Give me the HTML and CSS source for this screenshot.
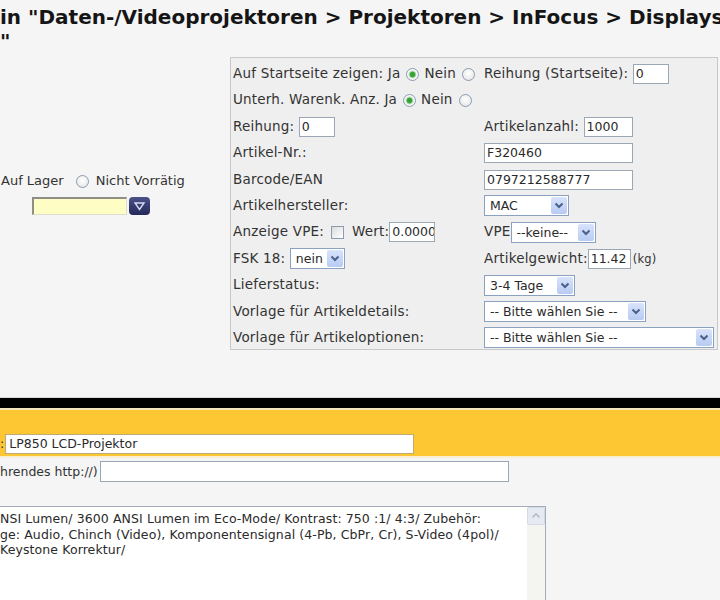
FILE: index.html
```html
<!DOCTYPE html>
<html lang="de">
<head>
<meta charset="utf-8">
<title>Artikel bearbeiten</title>
<link rel="stylesheet" href="styles.css">
</head>
<body>
<h1 class="title">in "Daten-/Videoprojektoren &gt; Projektoren &gt; InFocus &gt; Displays<br>"</h1>

<div class="main">
  <div class="stock">
    <div class="stock-line">Auf Lager<span class="radio stock-radio"></span>Nicht Vorrätig</div>
    <div class="date-row">
      <span class="date-input"></span><span class="date-btn"><svg width="21" height="18" viewBox="0 0 21 18"><polygon points="6,6 15,6 10.5,12.5" fill="none" stroke="#d6daf6" stroke-width="1.4"/></svg></span>
    </div>
  </div>

  <div class="panel">
    <div class="cell">Auf Startseite zeigen: Ja<span class="radio on"></span>Nein<span class="radio"></span></div>
    <div class="cell">Reihung (Startseite): <span class="inp w36">0</span></div>

    <div class="cell">Unterh. Warenk. Anz. Ja<span class="radio on"></span>Nein<span class="radio"></span></div>
    <div class="cell"></div>

    <div class="cell">Reihung: <span class="inp w36">0</span></div>
    <div class="cell">Artikelanzahl: <span class="inp w49">1000</span></div>

    <div class="cell">Artikel-Nr.:</div>
    <div class="cell"><span class="inp w149">F320460</span></div>

    <div class="cell">Barcode/EAN</div>
    <div class="cell"><span class="inp w149">0797212588777</span></div>

    <div class="cell">Artikelhersteller:</div>
    <div class="cell"><span class="sel w85"><span class="txt">MAC</span><span class="arr"><svg width="16" height="17" viewBox="0 0 16 17"><polyline points="4.5,6.5 8,10 11.5,6.5" fill="none" stroke="#4a5f8c" stroke-width="2"/></svg></span></span></div>

    <div class="cell">Anzeige VPE: <span class="check"></span> Wert:<span class="inp w46">0.0000</span></div>
    <div class="cell">VPE<span class="sel w85"><span class="txt">--keine--</span><span class="arr"><svg width="16" height="17" viewBox="0 0 16 17"><polyline points="4.5,6.5 8,10 11.5,6.5" fill="none" stroke="#4a5f8c" stroke-width="2"/></svg></span></span></div>

    <div class="cell">FSK 18: <span class="sel w55"><span class="txt">nein</span><span class="arr"><svg width="16" height="17" viewBox="0 0 16 17"><polyline points="4.5,6.5 8,10 11.5,6.5" fill="none" stroke="#4a5f8c" stroke-width="2"/></svg></span></span></div>
    <div class="cell">Artikelgewicht:<span class="inp w43">11.42</span><span class="unit">(kg)</span></div>

    <div class="cell">Lieferstatus:</div>
    <div class="cell"><span class="sel w91"><span class="txt">3-4 Tage</span><span class="arr"><svg width="16" height="17" viewBox="0 0 16 17"><polyline points="4.5,6.5 8,10 11.5,6.5" fill="none" stroke="#4a5f8c" stroke-width="2"/></svg></span></span></div>

    <div class="cell">Vorlage für Artikeldetails:</div>
    <div class="cell"><span class="sel w162"><span class="txt">-- Bitte wählen Sie --</span><span class="arr"><svg width="16" height="17" viewBox="0 0 16 17"><polyline points="4.5,6.5 8,10 11.5,6.5" fill="none" stroke="#4a5f8c" stroke-width="2"/></svg></span></span></div>

    <div class="cell">Vorlage für Artikeloptionen:</div>
    <div class="cell"><span class="sel w230"><span class="txt">-- Bitte wählen Sie --</span><span class="arr"><svg width="16" height="17" viewBox="0 0 16 17"><polyline points="4.5,6.5 8,10 11.5,6.5" fill="none" stroke="#4a5f8c" stroke-width="2"/></svg></span></span></div>
  </div>
</div>

<div class="bar"></div>
<div class="yellow">
  <div class="name-row">:<span class="inp name">LP850 LCD-Projektor</span></div>
</div>
<div class="url-row">hrendes http://)<span class="inp url"></span></div>

<div class="ta">
  <div class="ta-text">NSI Lumen/ 3600 ANSI Lumen im Eco-Mode/ Kontrast: 750 :1/ 4:3/ Zubehör:
ge: Audio, Chinch (Video), Komponentensignal (4-Pb, CbPr, Cr), S-Video (4pol)/
Keystone Korrektur/</div>
  <div class="ta-scroll"><span class="ta-up"><svg width="16" height="16" viewBox="0 0 16 16"><polyline points="4.5,9.5 8,6 11.5,9.5" fill="none" stroke="#b4bccb" stroke-width="1.6"/></svg></span></div>
</div>
</body>
</html>
```

FILE: styles.css
```css
html, body {
  margin: 0;
  width: 720px;
  height: 600px;
  overflow: hidden;
}
body {
  background: #f5f5f5;
  font-family: "DejaVu Sans", Verdana, sans-serif;
  font-size: 13.5px;
  color: #333;
}
.title {
  margin: 0;
  padding-top: 5px;
  font-size: 20px;
  line-height: 24px;
  font-weight: bold;
  white-space: nowrap;
  color: #151515;
}
.main {
  display: flex;
  margin-top: 4px;
}
.stock {
  width: 230px;
  flex: none;
  padding-top: 115px;
  box-sizing: border-box;
}
.stock-line {
  font-size: 13px;
  line-height: 18px;
  white-space: nowrap;
  padding-left: 1px;
}
.date-row {
  display: flex;
  margin-top: 7px;
  margin-left: 32px;
  gap: 2px;
}
.date-input {
  width: 95px;
  height: 18px;
  box-sizing: border-box;
  background: #fdfdc4;
  border-top: 2px solid #8e8e86;
  border-left: 2px solid #8e8e86;
  border-right: 1px solid #dcdcd0;
  border-bottom: 1px solid #dcdcd0;
}
.date-btn {
  width: 21px;
  height: 18px;
  box-sizing: border-box;
  border-radius: 4px;
  background: linear-gradient(#4b5288, #23285a);
  display: flex;
}
.panel {
  width: 488px;
  height: 293px;
  flex: none;
  box-sizing: border-box;
  border: 1px solid #c8c8c8;
  background: #efefef;
  padding: 2px 0 0 2px;
  display: grid;
  grid-template-columns: 251px 1fr;
  grid-auto-rows: 26.4px;
}
.cell {
  line-height: 26.4px;
  white-space: nowrap;
  letter-spacing: 0.2px;
}
.radio {
  display: inline-block;
  width: 13px;
  height: 13px;
  box-sizing: border-box;
  border: 1px solid #8b9bb2;
  border-radius: 50%;
  background: radial-gradient(circle at 50% 40%, #ffffff, #e2e2e2);
  vertical-align: middle;
  margin: 0 5px 0 6px;
}
.radio.on {
  background: radial-gradient(circle, #2f9e2f 0, #3aa83a 2.4px, #a8d9a0 3.2px, #f2f2f2 4.2px, #ffffff 6px);
}
.stock-radio {
  margin: 0 7px 0 12px;
}
.check {
  display: inline-block;
  width: 13px;
  height: 13px;
  box-sizing: border-box;
  border: 1px solid #8b9bb2;
  background: linear-gradient(135deg, #dcdcdc, #ffffff);
  vertical-align: middle;
  margin: 0 3px 0 3px;
}
.inp {
  display: inline-block;
  height: 20px;
  box-sizing: border-box;
  border: 1px solid #9ca7b6;
  background: #fff;
  font-size: 12.5px;
  line-height: 18px;
  letter-spacing: 0;
  padding: 0 2px;
  vertical-align: middle;
  overflow: hidden;
  color: #2a2a2a;
}
.w36 { width: 36px; }
.w43 { width: 43px; }
.w46 { width: 46px; }
.w49 { width: 49px; }
.w149 { width: 149px; }
.unit {
  font-size: 11.5px;
  margin-left: 2px;
  vertical-align: middle;
}
.sel {
  display: inline-flex;
  align-items: center;
  height: 21px;
  box-sizing: border-box;
  border: 1px solid #8aa1c2;
  background: #fff;
  font-size: 12.5px;
  letter-spacing: 0;
  vertical-align: middle;
  padding-left: 5px;
  color: #2a2a2a;
}
.sel .txt {
  flex: 1;
  line-height: 19px;
  overflow: hidden;
}
.sel .arr {
  width: 16px;
  height: 17px;
  margin: 1px;
  border-radius: 2px;
  background: linear-gradient(#d8e3fb, #b7cbf3);
  display: flex;
}
.w55 { width: 55px; }
.w85 { width: 85px; }
.w91 { width: 91px; }
.w162 { width: 162px; }
.w230 { width: 230px; }

.bar {
  margin-top: 47px;
  height: 10px;
  background: #000;
  border-top: 1px solid #d6d6d6;
  border-bottom: 2px solid #f3e6bc;
}
.yellow {
  background: #fcc733;
  padding: 24px 0 2px 0;
  border-bottom: 2px solid #f7eed3;
}
.name-row {
  font-size: 12.5px;
  line-height: 20px;
  height: 20px;
  white-space: nowrap;
}
.name-row .inp.name {
  width: 409px;
  margin-left: 1px;
  vertical-align: top;
  border-color: #c0ab78;
  padding-left: 3px;
}
.url-row {
  margin-top: 3px;
  height: 21px;
  font-size: 12.5px;
  line-height: 21px;
  white-space: nowrap;
}
.url-row .inp.url {
  width: 409px;
  height: 21px;
  margin-left: 2px;
  vertical-align: top;
}
.ta {
  margin-top: 24px;
  margin-left: -10px;
  width: 556px;
  height: 130px;
  box-sizing: border-box;
  border: 1px solid #a3acb8;
  background: #fff;
  display: flex;
}
.ta-text {
  flex: 1;
  padding: 4px 0 0 9px;
  font-size: 12.5px;
  line-height: 15.5px;
  letter-spacing: 0.1px;
  white-space: pre;
  overflow: hidden;
  color: #2a2a2a;
}
.ta-scroll {
  width: 18px;
  flex: none;
  background: #f4f4f1;
}
.ta-up {
  display: flex;
  align-items: center;
  justify-content: center;
  width: 18px;
  height: 18px;
  box-sizing: border-box;
  border: 1px solid #d3dae5;
  border-radius: 2px;
  background: #e6ebf3;
}
```
